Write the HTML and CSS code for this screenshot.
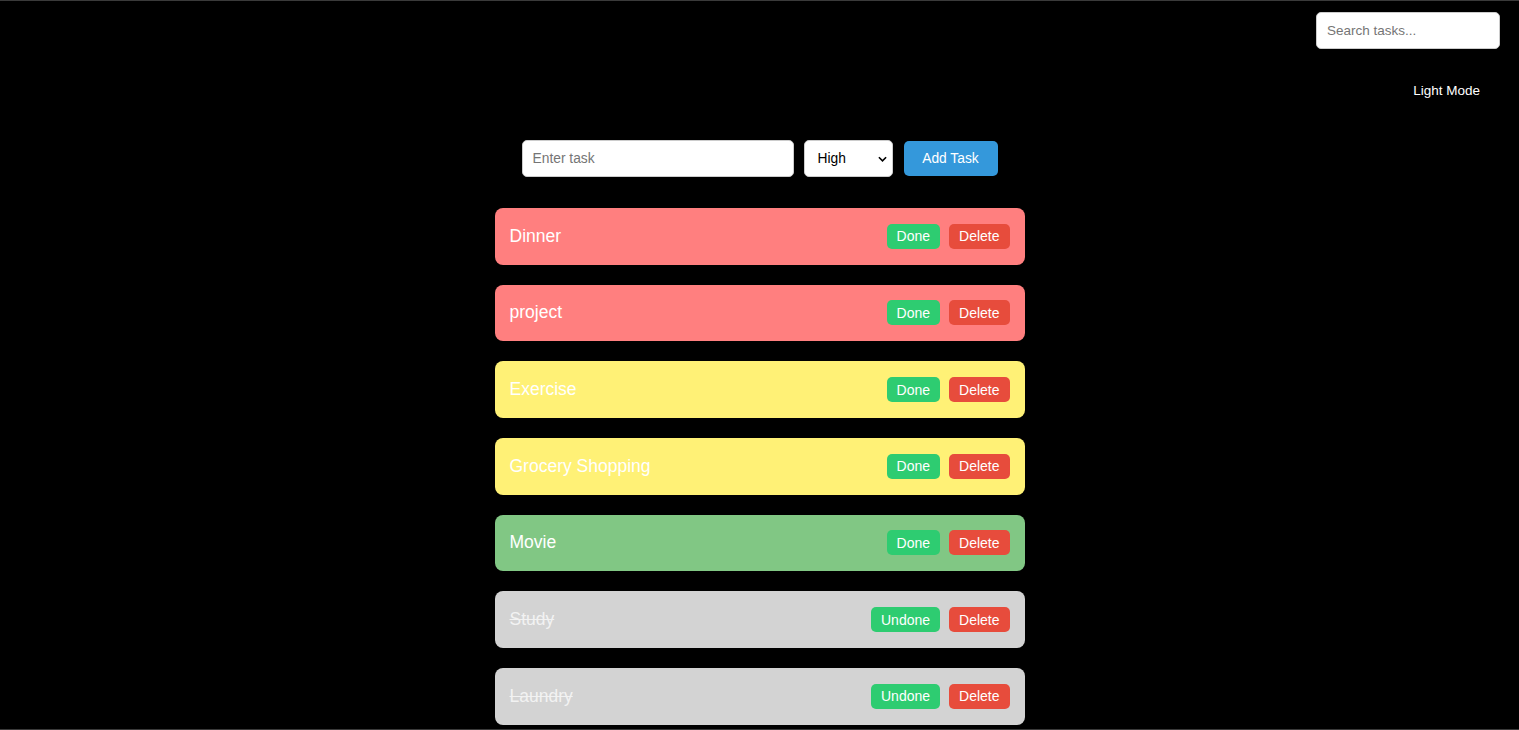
FILE: index.html
```html
<!DOCTYPE html>
<html lang="en">
<head>
<meta charset="utf-8">
<title>Task Manager</title>
<link rel="stylesheet" href="styles.css">
</head>
<body>
<div class="frame">
  <header class="topbar">
    <input class="search" type="text" placeholder="Search tasks...">
    <button class="mode-btn">Light Mode</button>
  </header>

  <div class="task-form">
    <input class="task-input" type="text" placeholder="Enter task">
    <select class="priority">
      <option>High</option>
      <option>Medium</option>
      <option>Low</option>
    </select>
    <button class="add-btn">Add Task</button>
  </div>

  <ul class="task-list">
    <li class="task high"><span class="task-name">Dinner</span><div class="actions"><button class="btn done">Done</button><button class="btn delete">Delete</button></div></li>
    <li class="task high"><span class="task-name">project</span><div class="actions"><button class="btn done">Done</button><button class="btn delete">Delete</button></div></li>
    <li class="task medium"><span class="task-name">Exercise</span><div class="actions"><button class="btn done">Done</button><button class="btn delete">Delete</button></div></li>
    <li class="task medium"><span class="task-name">Grocery Shopping</span><div class="actions"><button class="btn done">Done</button><button class="btn delete">Delete</button></div></li>
    <li class="task low"><span class="task-name">Movie</span><div class="actions"><button class="btn done">Done</button><button class="btn delete">Delete</button></div></li>
    <li class="task completed"><span class="task-name">Study</span><div class="actions"><button class="btn done">Undone</button><button class="btn delete">Delete</button></div></li>
    <li class="task completed"><span class="task-name">Laundry</span><div class="actions"><button class="btn done">Undone</button><button class="btn delete">Delete</button></div></li>
  </ul>
</div>
</body>
</html>
```

FILE: styles.css
```css
* {
  box-sizing: border-box;
}

html, body {
  margin: 0;
  padding: 0;
  background: #000;
  height: 100%;
  overflow: hidden;
}

body {
  font-family: "Liberation Sans", Arial, sans-serif;
  color: #fff;
}

.frame {
  height: 730px;
  border-top: 1px solid #3a3a3a;
  border-bottom: 1px solid #3a3a3a;
  overflow: hidden;
}

.topbar {
  display: flex;
  flex-direction: column;
  align-items: flex-end;
  padding: 11px 19px 0 0;
}

.search {
  width: 184px;
  height: 37px;
  padding: 10px;
  border: 1px solid #ccc;
  border-radius: 5px;
  font-family: "Liberation Sans", Arial, sans-serif;
  font-size: 13.5px;
  background: #fff;
  color: #000;
  outline: none;
}

.search::placeholder,
.task-input::placeholder {
  color: #757575;
}

.mode-btn {
  margin-top: 24px;
  background: transparent;
  border: none;
  color: #fff;
  padding: 10px 20px;
  font-family: "Liberation Sans", Arial, sans-serif;
  font-size: 13.5px;
  cursor: pointer;
}

.task-form {
  display: flex;
  justify-content: center;
  align-items: center;
  gap: 10px;
  margin-top: 32px;
}

.task-input {
  width: 272px;
  height: 37px;
  padding: 10px;
  border: 1px solid #ccc;
  border-radius: 5px;
  font-family: "Liberation Sans", Arial, sans-serif;
  font-size: 13.8px;
  background: #fff;
  outline: none;
}

.priority {
  width: 89px;
  height: 37px;
  padding: 0 10px 0 13px;
  border: 1px solid #ccc;
  border-radius: 5px;
  font-family: "Liberation Sans", Arial, sans-serif;
  font-size: 13.8px;
  color: #000;
  background-color: #fff;
  -webkit-appearance: none;
  appearance: none;
  background-image: url("data:image/svg+xml,%3Csvg xmlns='http://www.w3.org/2000/svg' width='10' height='6' viewBox='0 0 10 6'%3E%3Cpath d='M1 1l4 4 4-4' fill='none' stroke='%23000' stroke-width='1.8'/%3E%3C/svg%3E");
  background-repeat: no-repeat;
  background-position: right 5px center;
  background-size: 9px 6px;
}

.add-btn {
  width: 94px;
  height: 35px;
  margin-left: 1px;
  border: none;
  border-radius: 5px;
  background: #3498db;
  color: #fff;
  font-family: "Liberation Sans", Arial, sans-serif;
  font-size: 13.8px;
  padding: 0;
  cursor: pointer;
}

.task-list {
  list-style: none;
  width: 530px;
  margin: 31px auto 0;
  padding: 0;
  display: flex;
  flex-direction: column;
  gap: 20px;
}

.task {
  height: 56.67px;
  padding: 0 15px;
  border-radius: 8px;
  display: flex;
  align-items: center;
  justify-content: space-between;
}

.task.high { background: #ff7f7f; }
.task.medium { background: #fff176; }
.task.low { background: #81c784; }
.task.completed { background: #d3d3d3; }

.task-name {
  font-size: 17.5px;
  color: #fff;
}

.task.completed .task-name {
  text-decoration: line-through;
  color: #f2f2f2;
}

.actions {
  display: flex;
  gap: 9px;
}

.btn {
  border: none;
  border-radius: 5px;
  padding: 4px 10px;
  height: 25px;
  font-family: "Liberation Sans", Arial, sans-serif;
  font-size: 14px;
  color: #fff;
  cursor: pointer;
}

.btn.done { background: #2ecc71; }
.btn.delete { background: #e74c3c; }
```
